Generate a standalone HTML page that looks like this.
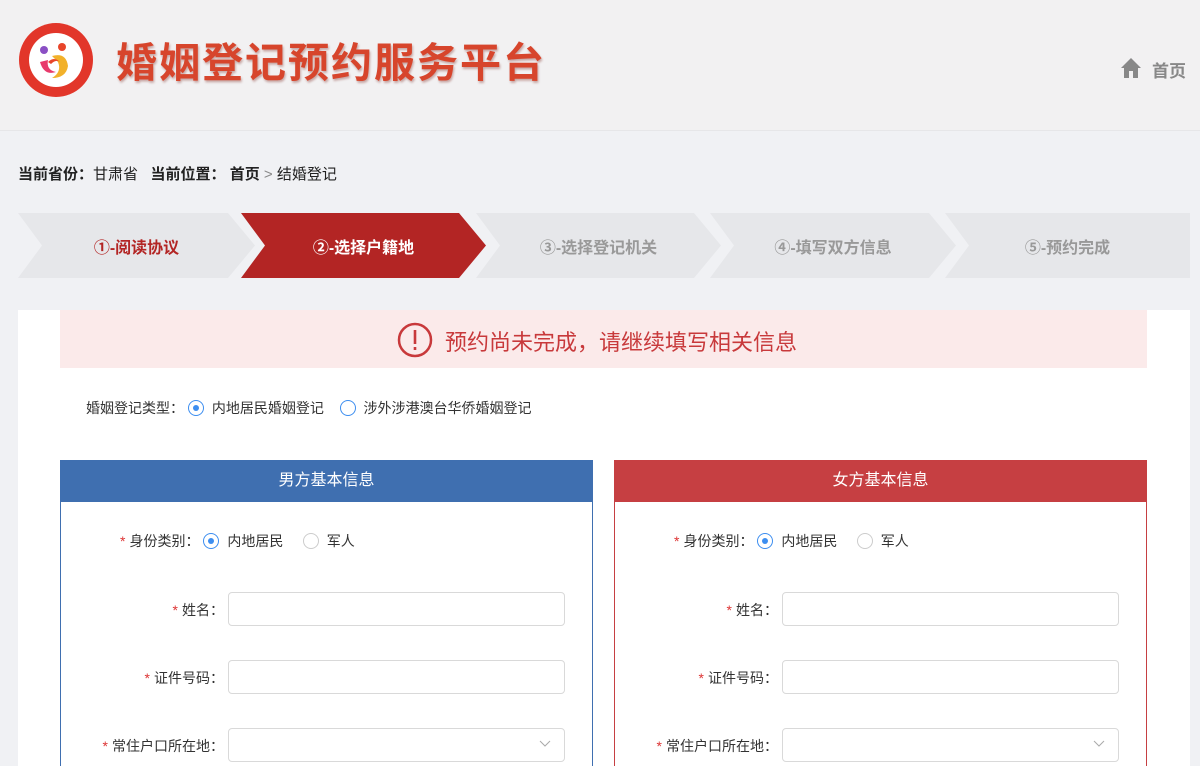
<!DOCTYPE html>
<html><head><meta charset="utf-8"><style>
*{margin:0;padding:0;box-sizing:border-box}
html,body{width:1200px;height:766px;overflow:hidden}
body{background:#f0f1f4;font-family:"Liberation Sans","Noto Sans CJK SC",sans-serif;position:relative;color:#333}
.abs{position:absolute}
.header{left:0;top:0;width:1200px;height:131px;background:#f2f1f2;border-bottom:1px solid #e6e6e8}
.title{left:116px;top:29px;font-size:41px;font-weight:bold;color:#d7452c;letter-spacing:2px;text-shadow:1px 2px 2px rgba(120,30,20,.35)}
.step{top:213px;height:65px;display:flex;align-items:center;justify-content:center;font-size:16px;font-weight:bold;color:#999}
.panel{top:460px;width:533px;height:320px;background:#fff}
.ph{height:42px;color:#fff;font-size:16px;text-align:center;line-height:42px}
.lbl{font-size:14px;color:#333;text-align:right}
.lbl b{color:#d33;font-weight:normal;margin-right:4px}
.inp{width:337px;height:34px;border:1px solid #d9d9d9;border-radius:4px;background:#fff}
.radio{width:16px;height:16px;border-radius:50%;border:1px solid #ccc;display:inline-block;vertical-align:-3px;position:relative;background:#fff;margin:0 4px}
.radio.on{border-color:#3d8ef0}
.radio.on:after{content:"";position:absolute;left:4px;top:4px;width:6px;height:6px;border-radius:50%;background:#3d8ef0}
</style></head><body>
<div class="abs header"></div>
<svg class="abs" style="left:18px;top:22px" width="76" height="76" viewBox="0 0 76 76">
<circle cx="38" cy="38" r="37" fill="#e2362a"/><circle cx="38" cy="38" r="27" fill="#fff"/>
<circle cx="26" cy="28" r="4" fill="#8a4fc4"/><circle cx="44" cy="25" r="4" fill="#e8452a"/>
<path d="M22 40 q4 14 16 10 q-10 -2 -8 -12z" fill="#e83a6b"/><path d="M34 34 q14 -4 16 10 q-2 12 -16 12 q10 -6 6 -16z" fill="#f2b12a"/>
<path d="M30 40 q6 -6 12 0 q-4 -3 -9 2z" fill="#e8452a"/></svg>
<div class="abs title">婚姻登记预约服务平台</div>
<svg class="abs" style="left:1120px;top:57px" width="22" height="22" viewBox="0 0 22 22"><path d="M11 1 L1 11 H4 V21 H9 V14 H13 V21 H18 V11 H21 Z" fill="#888"/></svg>
<div class="abs" style="left:1152px;top:57px;font-size:17px;font-weight:bold;color:#888">首页</div>
<div class="abs" style="left:18px;top:163px;font-size:15px;color:#222"><b>当前省份：</b>甘肃省 &nbsp;&nbsp;<b>当前位置：</b> <b>首页</b> <span style="color:#888">&gt;</span> 结婚登记</div>
<div class="abs step" style="left:18px;width:237px;background:#e6e7ea;clip-path:polygon(0 0,210px 0,100% 50%,210px 100%,0 100%,24px 50%);color:#b32524">①-阅读协议</div>
<div class="abs step" style="left:241px;width:245px;background:#b32524;clip-path:polygon(0 0,218px 0,100% 50%,218px 100%,0 100%,24px 50%);color:#fff">②-选择户籍地</div>
<div class="abs step" style="left:476px;width:245px;background:#e6e7ea;clip-path:polygon(0 0,218px 0,100% 50%,218px 100%,0 100%,24px 50%)">③-选择登记机关</div>
<div class="abs step" style="left:710px;width:246px;background:#e6e7ea;clip-path:polygon(0 0,219px 0,100% 50%,219px 100%,0 100%,24px 50%)">④-填写双方信息</div>
<div class="abs step" style="left:945px;width:245px;background:#e6e7ea;clip-path:polygon(0 0,100% 0,100% 100%,0 100%,24px 50%)">⑤-预约完成</div>
<div class="abs" style="left:18px;top:310px;width:1172px;height:470px;background:#fff"></div>
<div class="abs" style="left:60px;top:310px;width:1087px;height:58px;background:#fbeaea"></div>
<svg class="abs" style="left:397px;top:322px" width="36" height="36" viewBox="0 0 36 36"><circle cx="18" cy="18" r="16" fill="none" stroke="#c8393b" stroke-width="2.5"/><rect x="16.7" y="8" width="2.6" height="14" fill="#c8393b"/><rect x="16.7" y="25" width="2.6" height="3" fill="#c8393b"/></svg>
<div class="abs" style="left:445px;top:325px;font-size:22px;color:#c8393b">预约尚未完成，请继续填写相关信息</div>
<div class="abs" style="left:86px;top:398px;font-size:14px">婚姻登记类型：<span class="radio on"></span> 内地居民婚姻登记 &nbsp; <span class="radio" style="border-color:#3d8ef0"></span> 涉外涉港澳台华侨婚姻登记</div>
<div class="abs panel" style="left:60px;border:1px solid #3f6fb0"><div class="ph" style="background:#3f6fb0;margin:-1px">男方基本信息</div></div>
<div class="abs panel" style="left:614px;border:1px solid #c63f42"><div class="ph" style="background:#c63f42;margin:-1px">女方基本信息</div></div>
<div class="abs lbl" style="left:120px;top:531px"><b>*</b>身份类别：<span class="radio on"></span> 内地居民 &nbsp;&nbsp; <span class="radio"></span> 军人</div>
<div class="abs lbl" style="left:674px;top:531px"><b>*</b>身份类别：<span class="radio on"></span> 内地居民 &nbsp;&nbsp; <span class="radio"></span> 军人</div>
<div class="abs lbl" style="left:60px;width:164px;top:600px"><b>*</b>姓名：</div>
<div class="abs lbl" style="left:60px;width:164px;top:668px"><b>*</b>证件号码：</div>
<div class="abs lbl" style="left:60px;width:164px;top:736px"><b>*</b>常住户口所在地：</div>
<div class="abs lbl" style="left:614px;width:164px;top:600px"><b>*</b>姓名：</div>
<div class="abs lbl" style="left:614px;width:164px;top:668px"><b>*</b>证件号码：</div>
<div class="abs lbl" style="left:614px;width:164px;top:736px"><b>*</b>常住户口所在地：</div>
<div class="abs inp" style="left:228px;top:592px"></div><div class="abs inp" style="left:228px;top:660px"></div><div class="abs inp" style="left:228px;top:728px"></div>
<div class="abs inp" style="left:782px;top:592px"></div><div class="abs inp" style="left:782px;top:660px"></div><div class="abs inp" style="left:782px;top:728px"></div>
<svg class="abs" style="left:539px;top:740px" width="12" height="8"><path d="M1 1 L6 6 L11 1" fill="none" stroke="#aaa"/></svg>
<svg class="abs" style="left:1093px;top:740px" width="12" height="8"><path d="M1 1 L6 6 L11 1" fill="none" stroke="#aaa"/></svg>
</body></html>
